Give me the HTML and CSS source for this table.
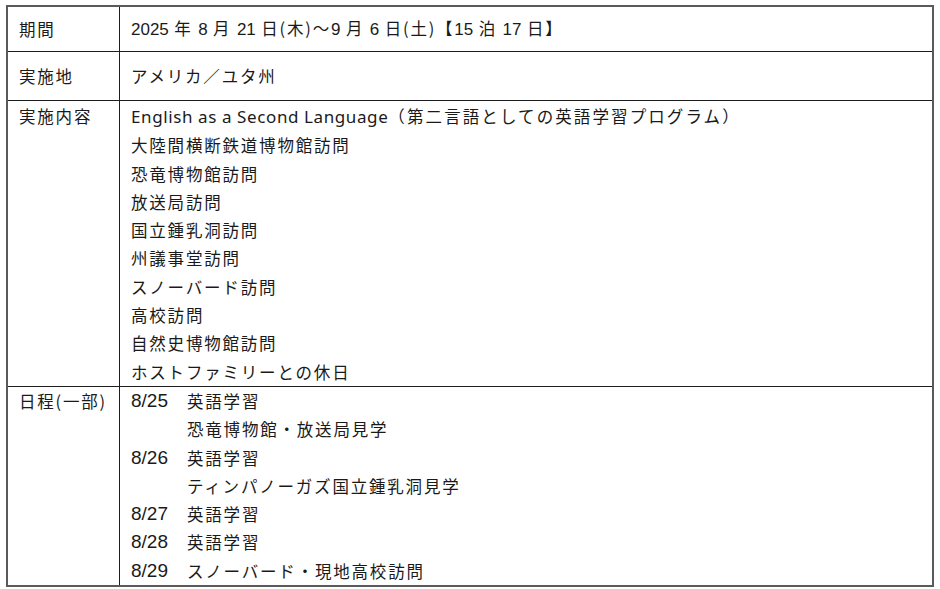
FILE: index.html
```html
<!DOCTYPE html>
<html lang="ja">
<head>
<meta charset="utf-8">
<link rel="stylesheet" href="styles.css">
</head>
<body>
<table class="info">
  <tr class="r1">
    <th>期間</th>
    <td><span class="lat">2025</span> 年 <span class="lat">8</span> 月 <span class="lat">21</span> 日(木)～<span class="lat">9</span> 月 <span class="lat">6</span> 日(土)【<span class="lat">15</span> 泊 <span class="lat">17</span> 日】</td>
  </tr>
  <tr class="r2">
    <th>実施地</th>
    <td>アメリカ／ユタ州</td>
  </tr>
  <tr class="r3">
    <th>実施内容</th>
    <td>
      <div class="line"><span class="eng">English as a Second Language</span><span class="paren">（第二言語としての英語学習プログラム）</span></div>
      <div class="line">大陸間横断鉄道博物館訪問</div>
      <div class="line">恐竜博物館訪問</div>
      <div class="line">放送局訪問</div>
      <div class="line">国立鍾乳洞訪問</div>
      <div class="line">州議事堂訪問</div>
      <div class="line">スノーバード訪問</div>
      <div class="line">高校訪問</div>
      <div class="line">自然史博物館訪問</div>
      <div class="line">ホストファミリーとの休日</div>
    </td>
  </tr>
  <tr class="r4">
    <th>日程(一部)</th>
    <td>
      <div class="sched">
        <span class="date">8/25</span><span>英語学習</span>
        <span class="date"></span><span>恐竜博物館・放送局見学</span>
        <span class="date">8/26</span><span>英語学習</span>
        <span class="date"></span><span>ティンパノーガズ国立鍾乳洞見学</span>
        <span class="date">8/27</span><span>英語学習</span>
        <span class="date">8/28</span><span>英語学習</span>
        <span class="date">8/29</span><span>スノーバード・現地高校訪問</span>
      </div>
    </td>
  </tr>
</table>
</body>
</html>
```
FILE: styles.css
```css
html, body {
  margin: 0;
  background: #ffffff;
}
body {
  padding: 5px 0 0 6px;
  font-family: "Noto Sans CJK JP", sans-serif;
  font-size: 16.5px;
  letter-spacing: 1.8px;
  color: #1a1a1a;
}
.info {
  border-collapse: collapse;
  width: 928px;
  border: 2px solid #5a5a5a;
  table-layout: fixed;
}
.info th, .info td {
  border: 1px solid #1e1e1e;
  padding: 0 0 0 11px;
  text-align: left;
  font-weight: normal;
  line-height: 28.3px;
  vertical-align: middle;
}
.info th {
  width: 100px;
}
.r1 th, .r1 td { height: 43px; padding-top: 1px; }
.r2 th, .r2 td { height: 48px; }
.r3 th, .r3 td, .r4 th, .r4 td { vertical-align: top; }
.r3 th, .r3 td { padding-top: 1px; }
.lat {
  font-family: "Liberation Sans", sans-serif;
  font-size: 17px;
  letter-spacing: 0;
}
.eng {
  font-family: "Noto Sans", sans-serif;
  font-size: 17px;
  letter-spacing: 0.6px;
}
.paren {
  letter-spacing: 2.1px;
}
.sched {
  display: grid;
  grid-template-columns: 56px 1fr;
}
.date {
  font-family: "Liberation Sans", sans-serif;
  font-size: 19px;
  letter-spacing: 0;
}
```
